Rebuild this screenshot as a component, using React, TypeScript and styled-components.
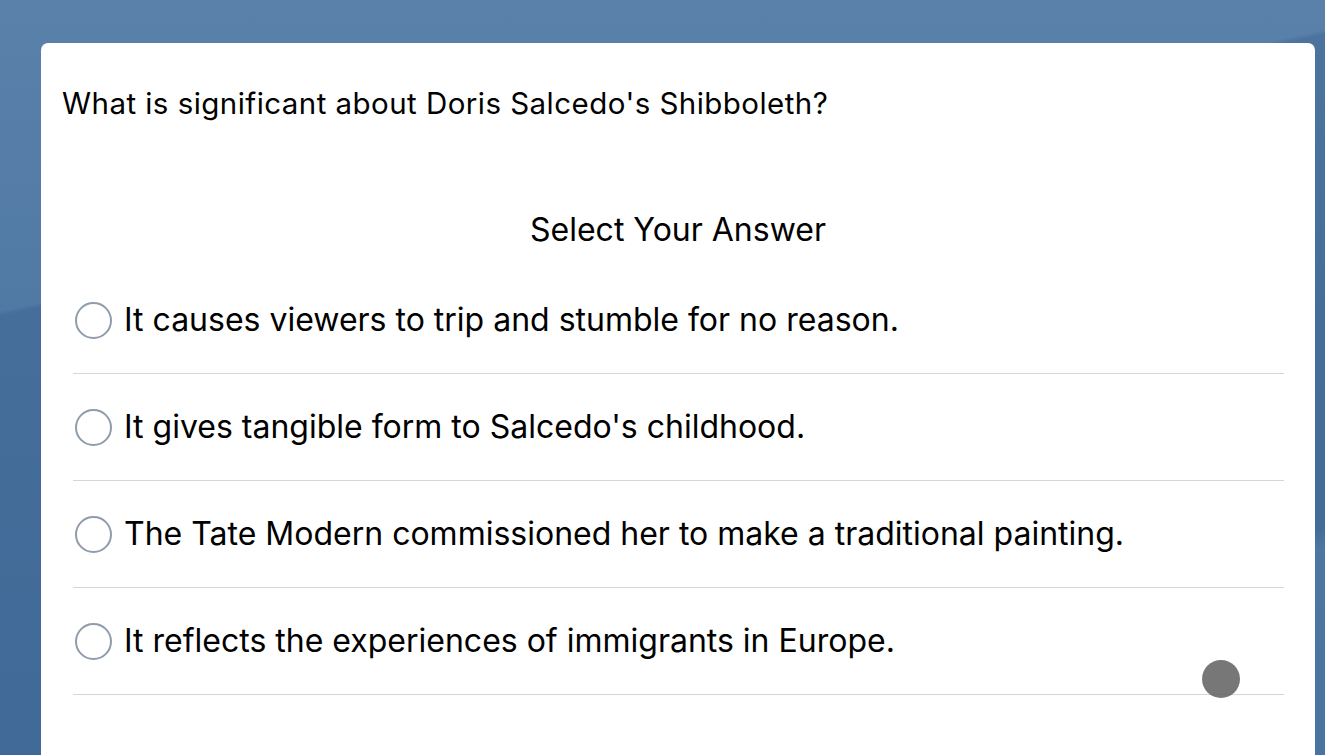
import React from "react";
import styled, { createGlobalStyle } from "styled-components";

const answers = [
    "It causes viewers to trip and stumble for no reason.",
    "It gives tangible form to Salcedo's childhood.",
    "The Tate Modern commissioned her to make a traditional painting.",
    "It reflects the experiences of immigrants in Europe.",
];

const App: React.FC = () => {
    return (
        <>
            <GlobalStyle />
            <Screen>
                <Card>
                    <Question>What is significant about Doris Salcedo's Shibboleth?</Question>
                    <Heading>Select Your Answer</Heading>
                    <AnswerList>
                        {answers.map((a) => (
                            <AnswerRow key={a}>
                                <Radio />
                                <AnswerText>{a}</AnswerText>
                            </AnswerRow>
                        ))}
                    </AnswerList>
                </Card>
                <TouchDot />
            </Screen>
        </>
    );
};

const GlobalStyle = createGlobalStyle`
  html, body {
    margin: 0;
    height: 100%;
    overflow: hidden;
  }
  body {
    font-family: Inter, "Liberation Sans", sans-serif;
    -webkit-font-smoothing: antialiased;
  }
  #root {
    height: 100%;
  }
`;

const Screen = styled.div`
    position: relative;
    height: 100vh;
    box-sizing: border-box;
    padding: 43px 10px 0 41px;
    display: flex;
    background:
        linear-gradient(168deg, transparent 0 30%, rgba(30, 70, 120, 0.22) 30.5% 78%, transparent 80%),
        linear-gradient(180deg, #5a81aa 0%, #5079a4 40%, #4a74a0 100%);
`;

const Card = styled.div`
    flex: 1;
    background: #ffffff;
    border-radius: 7px 7px 0 0;
    display: flex;
    flex-direction: column;
`;

const Question = styled.p`
    margin: 0;
    padding: 44px 0 0 21px;
    font-size: 29.5px;
    letter-spacing: 0.45px;
    line-height: 32px;
    color: #000;
`;

const Heading = styled.h2`
    margin: 95px 0 0;
    text-align: center;
    font-size: 32px;
    line-height: 32px;
    font-weight: 400;
    color: #000;
`;

const AnswerList = styled.div`
    margin: 21px 31px 0 32px;
    display: flex;
    flex-direction: column;
`;

const AnswerRow = styled.label`
    height: 106px;
    border-bottom: 1px solid #d6d6d6;
    display: flex;
    align-items: center;
    gap: 12px;
`;

const Radio = styled.span`
    width: 33px;
    height: 33px;
    margin-left: 2px;
    border: 2px solid #8f9cab;
    border-radius: 50%;
    flex-shrink: 0;
`;

const AnswerText = styled.span`
    font-size: 32px;
    line-height: 32px;
    color: #000;
`;

const TouchDot = styled.div`
    position: absolute;
    left: 1202px;
    top: 660px;
    width: 38px;
    height: 38px;
    border-radius: 50%;
    background: rgba(100, 100, 100, 0.88);
`;

export default App;
